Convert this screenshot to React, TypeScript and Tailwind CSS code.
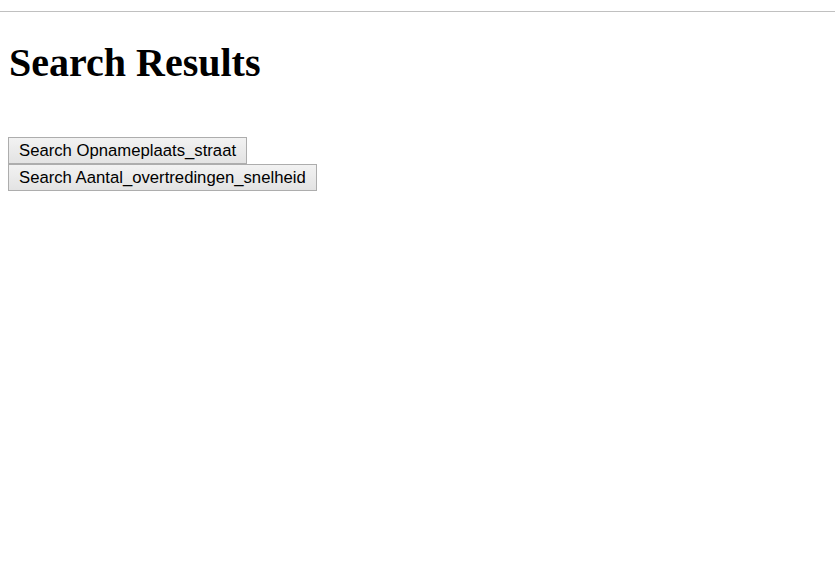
export default function App() {
  const fields = ['Opnameplaats_straat', 'Aantal_overtredingen_snelheid'];

  return (
    <div className="min-h-screen bg-white pt-[11px] text-black">
      <hr className="border-0 border-t border-[#c0c0c0]" />

      <div className="px-[8px]">
        <h1
          className="mt-[27px] pl-[1px] text-[40px] font-bold leading-[48px]"
          style={{ fontFamily: '"Liberation Serif", "Times New Roman", serif' }}
        >
          Search Results
        </h1>

        <div className="mt-[50px] flex flex-col items-start">
          {fields.map((f) => (
            <button
              key={f}
              className="h-[27px] border border-[#adadad] bg-gradient-to-b from-[#f2f2f2] to-[#e3e3e3] px-[10px] text-[16.7px] leading-[18px] text-black"
              style={{ fontFamily: '"Liberation Sans", Arial, sans-serif' }}
            >
              Search {f}
            </button>
          ))}
        </div>
      </div>
    </div>
  );
}
